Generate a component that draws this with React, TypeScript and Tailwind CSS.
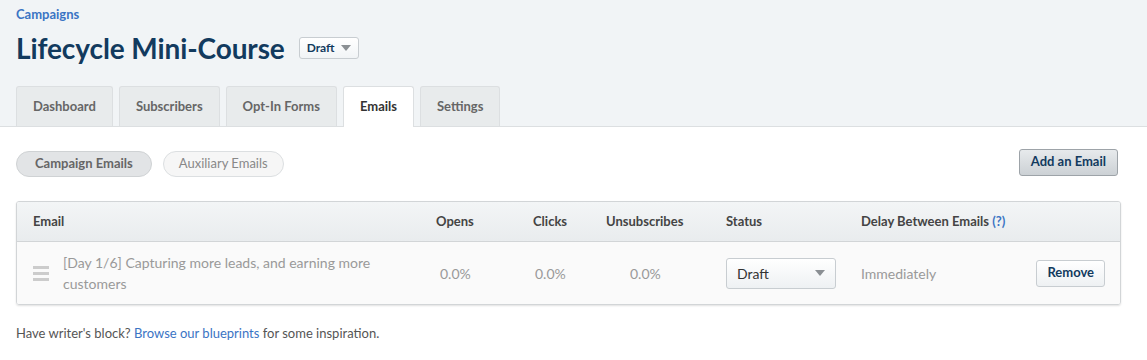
import React from 'react';

const tabs = ["Dashboard", "Subscribers", "Opt-In Forms", "Emails", "Settings"];

function Caret({ className }: { className?: string }) {
  return (
    <svg width="10" height="6" viewBox="0 0 10 6" className={className}>
      <path d="M0 0 L10 0 L5 6 Z" fill="#8a8f93" />
    </svg>
  );
}

export default function App() {
  return (
    <div className="min-h-[360px] bg-white text-[#444]" style={{ fontFamily: "Lato, 'Open Sans', sans-serif" }}>
      {/* header */}
      <div className="bg-[#f1f4f6] border-b border-[#dcdfe1] px-4 pt-[1px]">
        <a className="text-[13px] font-bold text-[#3b74c4]">Campaigns</a>
        <div className="flex items-center gap-[14px] mt-[5px]">
          <h1 className="text-[28px] font-bold text-[#123a5e] leading-[36px] tracking-[-0.1px]">Lifecycle Mini-Course</h1>
          <button className="flex items-center gap-[6px] h-[22px] px-[7px] rounded-[3px] border border-[#c8cdd1] bg-gradient-to-b from-white to-[#f1f4f6] text-[12px] font-bold text-[#123a5e]">
            Draft <Caret />
          </button>
        </div>
        <div className="flex gap-[6px] mt-[20px] -mb-px">
          {tabs.map((t) => (
            <div
              key={t}
              className={
                t === "Emails"
                  ? "h-[41px] px-[16px] flex items-center rounded-t-[3px] border border-b-0 border-[#dcdfe1] bg-white text-[13px] font-bold text-[#333]"
                  : "h-[40px] px-[16px] flex items-center rounded-t-[3px] border border-b-0 border-[#dcdfe1] bg-[#e8ebec] text-[13px] font-bold text-[#666]"
              }
            >
              {t}
            </div>
          ))}
        </div>
      </div>

      {/* body */}
      <div className="px-4 pt-[24px]">
        <div className="flex items-center justify-between pr-[13px]">
          <div className="flex gap-[11px]">
            <div className="h-[26px] px-[18px] flex items-center rounded-full border border-[#cfd2d4] bg-[#e2e4e6] text-[13px] font-bold text-[#666]">Campaign Emails</div>
            <div className="h-[26px] px-[15px] flex items-center rounded-full border border-[#dcdfe1] bg-[#f6f6f6] text-[13px] text-[#888]">Auxiliary Emails</div>
          </div>
          <button className="h-[27px] px-[11px] rounded-[3px] border border-[#9da3a8] bg-gradient-to-b from-[#e7eaec] to-[#ccd1d5] text-[13px] font-bold text-[#123a5e] -mt-[4px]">Add an Email</button>
        </div>

        <div className="mt-[24px] mr-[10px] rounded-[3px] border border-[#d2d5d7] shadow-[0_1px_2px_rgba(0,0,0,0.12)] overflow-hidden">
          <div className="h-[40px] flex items-center bg-gradient-to-b from-[#f3f5f6] to-[#e9ecee] border-b border-[#d2d5d7] text-[13px] font-bold text-[#444]">
            <div className="w-[419px] pl-4">Email</div>
            <div className="w-[97px]">Opens</div>
            <div className="w-[73px]">Clicks</div>
            <div className="w-[120px]">Unsubscribes</div>
            <div className="w-[135px]">Status</div>
            <div>Delay Between Emails <span className="text-[#3b74c4]">(?)</span></div>
          </div>
          <div className="h-[62px] flex items-center bg-[#fafafa] text-[14px] text-[#999]">
            <div className="w-[419px] pl-4 flex items-center">
              <div className="flex flex-col gap-[3px] mr-[14px]">
                <span className="block w-[16px] h-[3px] bg-[#cccccc]" />
                <span className="block w-[16px] h-[3px] bg-[#cccccc]" />
                <span className="block w-[16px] h-[3px] bg-[#cccccc]" />
              </div>
              <div className="leading-[21px] w-[320px]">[Day 1/6] Capturing more leads, and earning more customers</div>
            </div>
            <div className="w-[97px] pl-[4px]">0.0%</div>
            <div className="w-[73px] pl-[2px]">0.0%</div>
            <div className="w-[120px] pl-[24px]">0.0%</div>
            <div className="w-[135px]">
              <div className="w-[110px] h-[31px] px-[10px] flex items-center justify-between rounded-[3px] border border-[#c8cdd1] bg-gradient-to-b from-white to-[#eef1f3] text-[#333]">
                Draft <Caret />
              </div>
            </div>
            <div className="flex-1 flex items-center justify-between pr-[15px]">
              <span>Immediately</span>
              <button className="h-[27px] px-[10px] rounded-[3px] border border-[#c8cdd1] bg-gradient-to-b from-white to-[#eef1f3] text-[13px] font-bold text-[#123a5e]">Remove</button>
            </div>
          </div>
        </div>

        <p className="mt-[19px] text-[13px] text-[#555]">
          Have writer's block? <a className="text-[#3b74c4]">Browse our blueprints</a> for some inspiration.
        </p>
      </div>
    </div>
  );
}
